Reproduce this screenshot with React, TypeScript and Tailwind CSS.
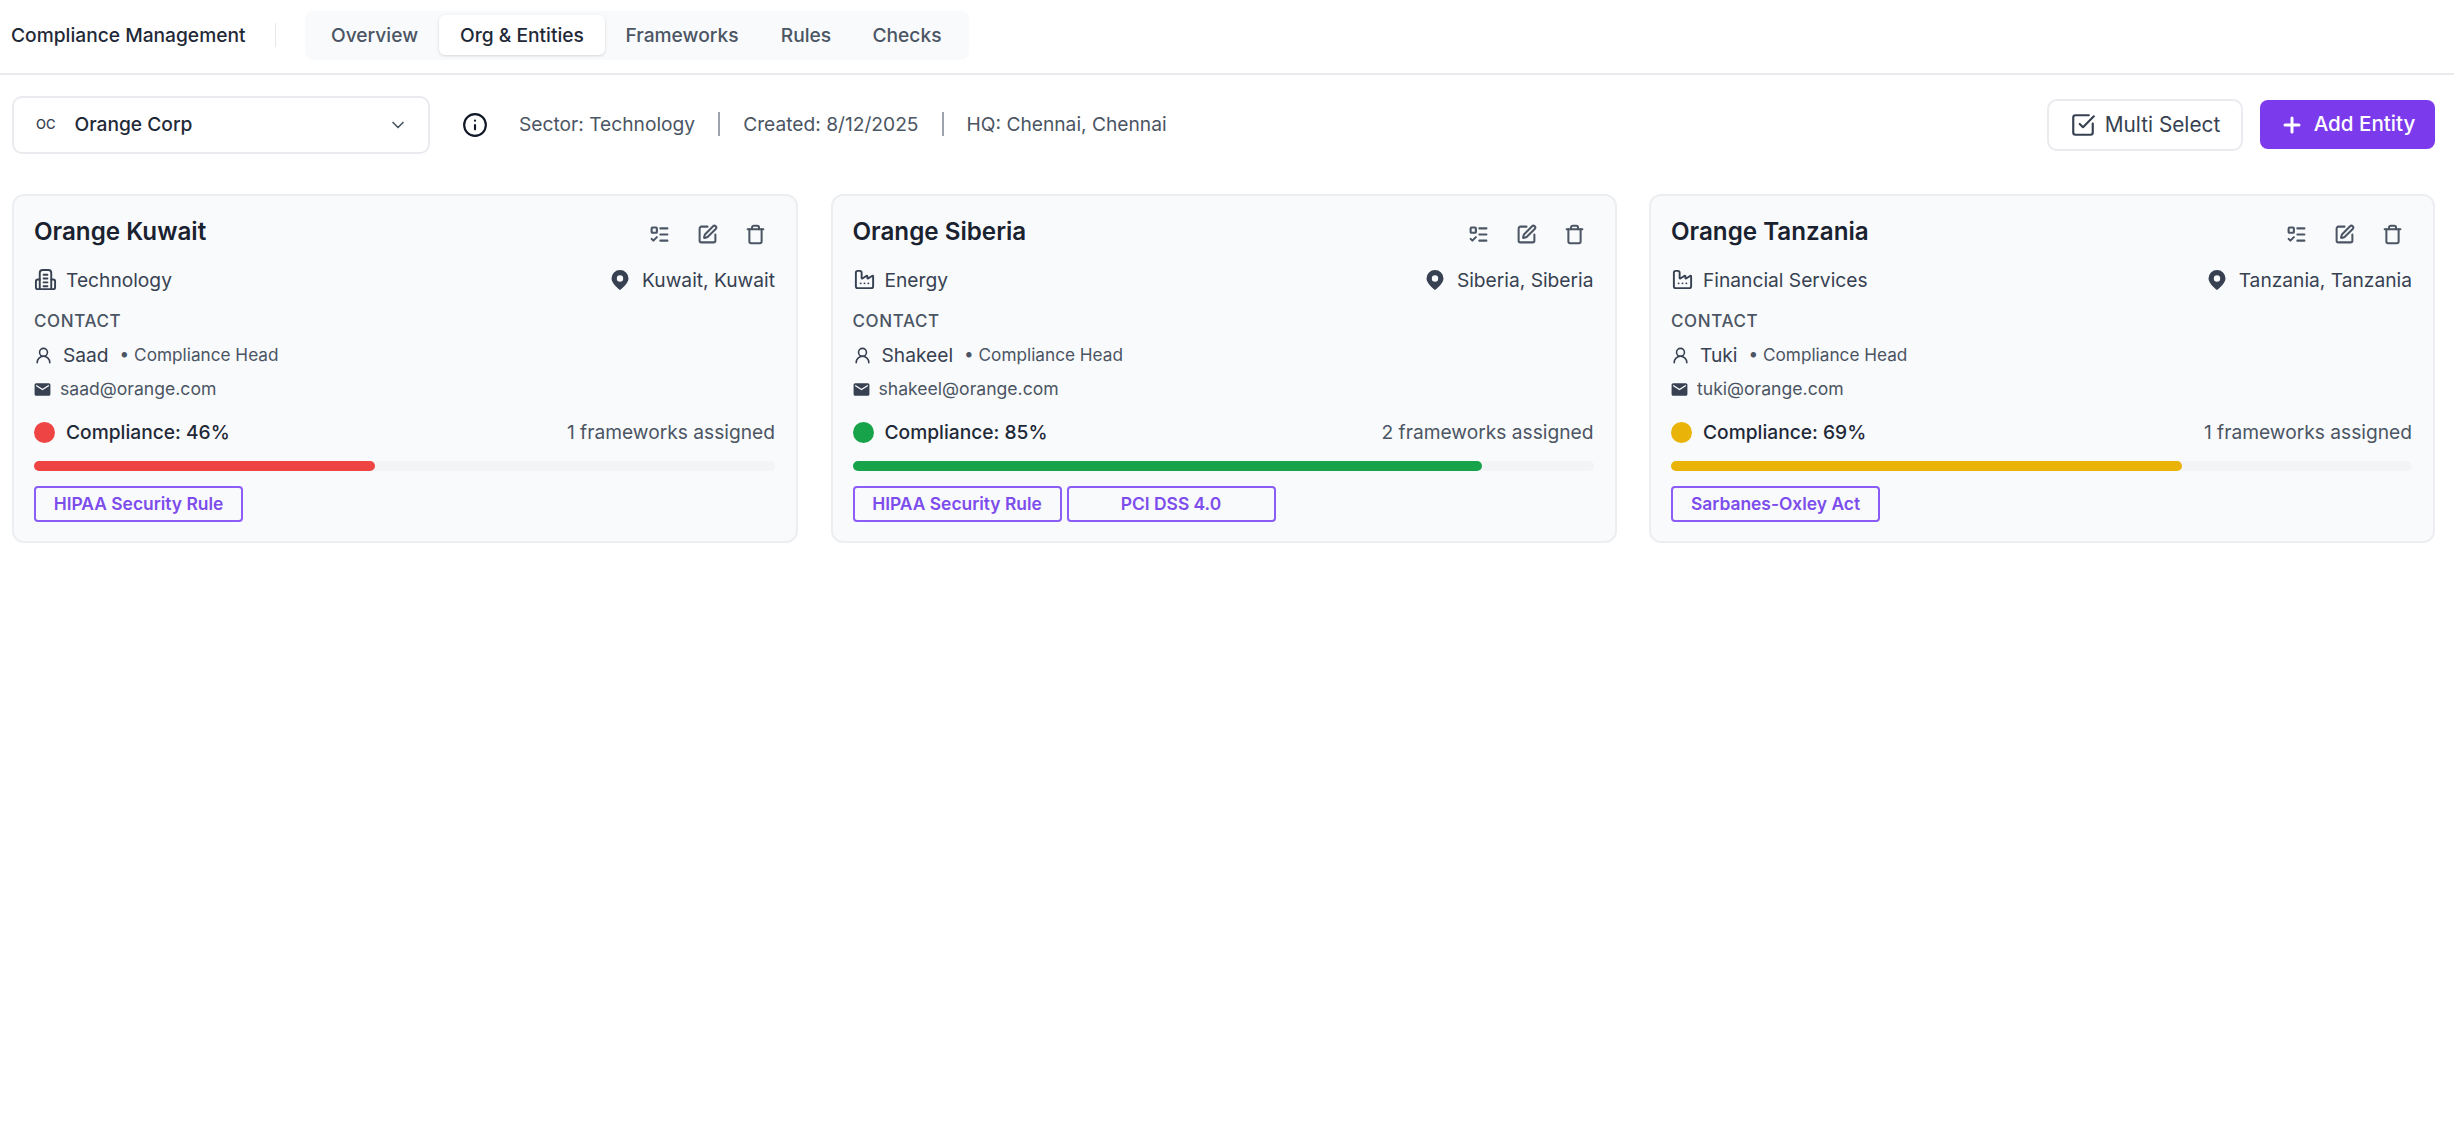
import { ChevronDown, Factory, Info, ListTodo, Plus, SquareCheckBig, SquarePen, Trash, UserRound } from 'lucide-react';
import { MdEmail } from 'react-icons/md';

const BuildingIcon = () => (
  <svg viewBox="0 0 24 24" className="w-[23px] h-[23px]" fill="none" stroke="currentColor" strokeWidth="2" strokeLinecap="round" strokeLinejoin="round">
    <path d="M6 22V5a3 3 0 0 1 3-3h6a3 3 0 0 1 3 3v17" />
    <path d="M6 12H4a2 2 0 0 0-2 2v6a2 2 0 0 0 2 2h16a2 2 0 0 0 2-2v-6a2 2 0 0 0-2-2h-2" />
    <path d="M10 7h4M10 11h4M10 15h4M10 19h4" />
  </svg>
);

const PinIcon = () => (
  <svg viewBox="0 0 24 24" className="w-[24px] h-[24px]" fill="currentColor">
    <path fillRule="evenodd" d="M12 2a8.5 8.5 0 0 0-8.5 8.5C3.5 16 12 22 12 22s8.5-6 8.5-11.5A8.5 8.5 0 0 0 12 2zm0 5.3a3.2 3.2 0 1 1 0 6.4 3.2 3.2 0 0 1 0-6.4z" />
  </svg>
);

const entities = [
  { name: 'Orange Kuwait', sector: 'Technology', icon: 'building', location: 'Kuwait, Kuwait', contact: 'Saad', email: 'saad@orange.com', score: 46, bar: 'bg-[#ef4444]', frameworks: ['HIPAA Security Rule'] },
  { name: 'Orange Siberia', sector: 'Energy', icon: 'factory', location: 'Siberia, Siberia', contact: 'Shakeel', email: 'shakeel@orange.com', score: 85, bar: 'bg-[#16a34a]', frameworks: ['HIPAA Security Rule', 'PCI DSS 4.0'] },
  { name: 'Orange Tanzania', sector: 'Financial Services', icon: 'factory', location: 'Tanzania, Tanzania', contact: 'Tuki', email: 'tuki@orange.com', score: 69, bar: 'bg-[#eab308]', frameworks: ['Sarbanes-Oxley Act'] },
];

function EntityCard({ entity }: { entity: (typeof entities)[number] }) {
  return (
    <div className="h-[349px] rounded-[12px] border-2 border-[#eceef1] bg-[#f9fafc] pl-[20px] pr-[21px] pt-[20px]">
      <div className="flex items-start justify-between h-[48px]">
        <h3 className="text-[24.2px] leading-[31px] font-semibold text-[#1a2230]">{entity.name}</h3>
        <div className="flex items-center gap-[27px] pr-[9px] pt-[8px] text-[#4b5563]">
          <ListTodo className="w-[21px] h-[21px]" strokeWidth={2.4} />
          <SquarePen className="w-[21px] h-[21px]" strokeWidth={2.3} />
          <Trash className="w-[21px] h-[21px]" strokeWidth={2.3} />
        </div>
      </div>
      <div className="flex items-center justify-between h-[32px] text-[19.2px] text-[#374151]">
        <div className="flex items-center gap-[9px]">
          {entity.icon === 'building' ? <BuildingIcon /> : <Factory className="w-[23px] h-[23px]" strokeWidth={2} />}
          <span>{entity.sector}</span>
        </div>
        <div className="flex items-center gap-[10px]">
          <PinIcon />
          <span>{entity.location}</span>
        </div>
      </div>
      <div className="mt-[13px] text-[17px] leading-[24px] tracking-[0.6px] font-medium text-[#4b5563]">CONTACT</div>
      <div className="mt-[8px] flex items-center h-[28px] text-[#374151]">
        <UserRound className="w-[19px] h-[19px]" strokeWidth={2} />
        <span className="ml-[10px] text-[19.2px]">{entity.contact}</span>
        <span className="ml-[11px] text-[17.2px] text-[#4b5563]">• Compliance Head</span>
      </div>
      <div className="mt-[6px] flex items-center h-[28px] text-[17.6px] text-[#4b5563]">
        <MdEmail className="w-[19px] h-[19px] -ml-[1px] text-[#374151]" />
        <span className="ml-[8px]">{entity.email}</span>
      </div>
      <div className="mt-[15px] flex items-center justify-between h-[28px]">
        <div className="flex items-center gap-[11px]">
          <span className={`w-[21px] h-[21px] rounded-full ${entity.bar}`} />
          <span className="text-[19.2px] font-medium text-[#1f2937]">Compliance: {entity.score}%</span>
        </div>
        <span className="text-[19.2px] text-[#4b5563]">{entity.frameworks.length} frameworks assigned</span>
      </div>
      <div className="mt-[15px] h-[10px] rounded-full bg-[#f3f4f6]">
        <div className={`h-full rounded-full ${entity.bar}`} style={{ width: `${entity.score}%` }} />
      </div>
      <div className="mt-[15px] flex gap-[5px]">
        {entity.frameworks.map(f => (
          <div key={f} className="flex items-center justify-center w-[209px] h-[36px] rounded-[4px] border-2 border-[#8b5cf6] text-[17.4px] font-semibold text-[#7c4dec]">
            {f}
          </div>
        ))}
      </div>
    </div>
  );
}

export default function App() {
  return (
    <div className="min-h-[1130px] bg-white font-['Inter',sans-serif]">
      <header className="flex items-center h-[75px] border-b-2 border-[#e9ebee] pl-[11px] pb-[3px]">
        <span className="w-[234px] text-[19.2px] font-medium whitespace-nowrap text-[#1f2937]">Compliance Management</span>
        <div className="ml-[30px] w-px h-[24px] bg-[#e5e7eb]" />
        <nav className="ml-[29px] flex items-center w-[664px] h-[49px] rounded-[8px] bg-[#f8fafc] pl-[5px] text-[19.2px] font-medium text-[#4b5563]">
          <span className="w-[129px] text-center">Overview</span>
          <span className="w-[166px] h-[40px] flex items-center justify-center rounded-[6px] bg-white text-[#1f2937] shadow-[0_1px_3px_rgba(0,0,0,0.15)]">Org & Entities</span>
          <span className="w-[154px] text-center">Frameworks</span>
          <span className="w-[94px] text-center">Rules</span>
          <span className="w-[108px] text-center">Checks</span>
        </nav>
      </header>
      <div className="flex items-center justify-between h-[119px] pb-[20px] pl-[12px] pr-[19px]">
        <div className="flex items-center">
          <div className="flex items-center w-[418px] h-[58px] rounded-[10px] border-2 border-[#e9ebee] bg-white pl-[22px] pr-[20px]">
            <span className="text-[13px] font-medium text-[#374151]">OC</span>
            <span className="ml-[19px] text-[19.2px] font-medium text-[#1f2937]">Orange Corp</span>
            <ChevronDown className="ml-auto w-[20px] h-[20px] text-[#4b5563]" strokeWidth={2} />
          </div>
          <Info className="ml-[32px] w-[26px] h-[26px] text-[#111827]" strokeWidth={2} />
          <div className="ml-[31px] flex items-center text-[19.2px] text-[#4b5563]">
            <span>Sector: Technology</span>
            <span className="mx-[23px] w-[2px] h-[24px] bg-[#9ca3af]" />
            <span>Created: 8/12/2025</span>
            <span className="mx-[23px] w-[2px] h-[24px] bg-[#9ca3af]" />
            <span>HQ: Chennai, Chennai</span>
          </div>
        </div>
        <div className="flex items-center gap-[17px]">
          <button className="flex items-center justify-center gap-[9px] w-[196px] h-[52px] rounded-[10px] border-2 border-[#e9ebee] bg-white text-[20.8px] text-[#374151]">
            <SquareCheckBig className="w-[26px] h-[26px]" strokeWidth={2} />
            Multi Select
          </button>
          <button className="flex items-center justify-center gap-[10px] w-[175px] h-[49px] rounded-[8px] bg-[#7c3aed] text-[20.6px] font-medium text-white">
            <Plus className="w-[24px] h-[24px]" strokeWidth={3} />
            Add Entity
          </button>
        </div>
      </div>
      <div className="grid grid-cols-3 gap-[32.5px] pl-[12px] pr-[19px]">
        {entities.map(e => <EntityCard key={e.name} entity={e} />)}
      </div>
    </div>
  );
}
